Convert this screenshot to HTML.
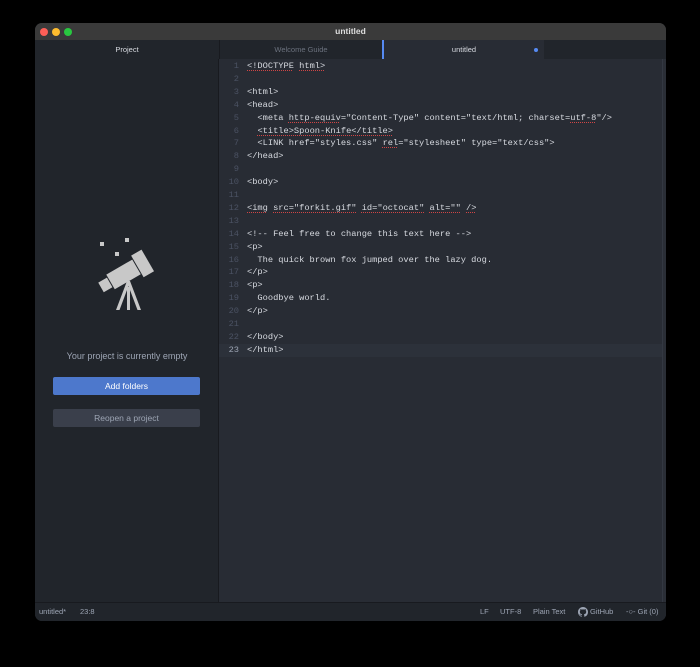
<!DOCTYPE html>
<html><head><meta charset="utf-8"><style>
*{margin:0;padding:0;box-sizing:border-box}
body{width:700px;height:667px;background:#000;position:relative;overflow:hidden;font-family:"Liberation Sans",sans-serif}
.win{position:absolute;left:35px;top:23px;width:631px;height:598px;border-radius:7px;overflow:hidden;background:#282c34}
.title{position:absolute;left:0;top:0;width:100%;height:17px;background:#3a3a3a;color:#ddd;font-size:8.5px;font-weight:bold;text-align:center;line-height:17px}
.dot{position:absolute;top:5px;width:8px;height:8px;border-radius:50%}
.tabs{position:absolute;left:0;top:17px;width:100%;height:19px;background:#21252b;font-size:7.5px;line-height:19px}
.side{position:absolute;left:0;top:36px;width:184px;height:543px;background:#21252b;border-right:1px solid #181a1f}
.ed{position:absolute;left:184px;top:36px;width:447px;height:543px;background:#282c34}
.code{position:absolute;left:0;top:1px;font-family:"Liberation Mono",monospace;font-size:8.7px;line-height:12.9px;color:#d7dae0;white-space:pre}
.ln{position:absolute;left:0;width:20px;text-align:right;color:#4b5263}
.tx{position:absolute;left:28px}
.u{text-decoration-line:underline;text-decoration-style:dotted;text-decoration-color:#d04545;text-underline-offset:2px}
.status{position:absolute;left:0;top:579px;width:100%;height:19px;background:#21252b;border-top:1px solid #181a1f;color:#9da5b4;font-size:7.5px;line-height:18px}
</style></head><body>
<div class="win">
 <div class="title">untitled
  <div class="dot" style="left:5px;background:#fe5f57"></div>
  <div class="dot" style="left:17px;background:#febc2e"></div>
  <div class="dot" style="left:29px;background:#28c840"></div>
 </div>
 <div class="tabs">
  <div style="position:absolute;left:0;width:184px;text-align:center;color:#d7dae0">Project</div>
  <div style="position:absolute;left:184px;width:163px;text-align:center;color:#6b717d;border-left:1px solid #181a1f">Welcome Guide</div>
  <div style="position:absolute;left:347px;width:162px;height:19px;background:#282c34;border-left:2px solid #568af2;text-align:center;color:#d7dae0">untitled<span style="position:absolute;left:150px;top:8px;width:4px;height:4px;border-radius:50%;background:#568af2"></span></div>
 </div>
 <div class="side">
  <svg style="position:absolute;left:60px;top:178px" width="66" height="78" viewBox="0 0 66 78">
   <g fill="#c8c8c8">
    <rect x="5" y="5" width="4" height="4"/><rect x="30" y="1" width="4" height="4"/><rect x="20" y="15" width="4" height="4"/>
    <g transform="rotate(-30 30 36)"><rect x="2" y="31" width="10" height="11"/><rect x="13" y="28" width="30" height="17"/><rect x="44" y="24" width="12" height="25"/></g>
    <path d="M32 44 h3 l11 29 h-3.5 l-9-24 l-9 24 h-3.5z"/>
    <rect x="32" y="50" width="3" height="23"/>
   </g>
  </svg>
  <div style="position:absolute;left:0;top:292px;width:184px;text-align:center;color:#9da5b4;font-size:9px">Your project is currently empty</div>
  <div style="position:absolute;left:18px;top:318px;width:147px;height:18px;background:#4d78cc;border-radius:2px;color:#fff;font-size:8.5px;text-align:center;line-height:18px">Add folders</div>
  <div style="position:absolute;left:18px;top:350px;width:147px;height:18px;background:#3a3f4b;border-radius:2px;color:#9da5b4;font-size:8.5px;text-align:center;line-height:18px">Reopen a project</div>
 </div>
 <div class="ed">
  <div style="position:absolute;left:0;top:285px;width:447px;height:13px;background:#2c313a"></div>
  <div style="position:absolute;right:0;top:0;width:4px;height:543px;background:#2a2e36;border-left:1px solid #333842"></div>
  <div class="code" style="width:447px">
<div class="ln" style="top:0">1</div><div class="tx" style="top:0"><span class="u">&lt;!DOCTYPE</span> <span class="u">html&gt;</span></div>
<div class="ln" style="top:12.9px">2</div>
<div class="ln" style="top:25.8px">3</div><div class="tx" style="top:25.8px">&lt;html&gt;</div>
<div class="ln" style="top:38.7px">4</div><div class="tx" style="top:38.7px">&lt;head&gt;</div>
<div class="ln" style="top:51.6px">5</div><div class="tx" style="top:51.6px">  &lt;meta <span class="u">http-equiv</span>="Content-Type" content="text/html; charset=<span class="u">utf-8</span>"/&gt;</div>
<div class="ln" style="top:64.5px">6</div><div class="tx" style="top:64.5px">  <span class="u">&lt;title&gt;Spoon-Knife&lt;/title&gt;</span></div>
<div class="ln" style="top:77.4px">7</div><div class="tx" style="top:77.4px">  &lt;LINK href="styles.css" <span class="u">rel</span>="stylesheet" type="text/css"&gt;</div>
<div class="ln" style="top:90.3px">8</div><div class="tx" style="top:90.3px">&lt;/head&gt;</div>
<div class="ln" style="top:103.2px">9</div>
<div class="ln" style="top:116.1px">10</div><div class="tx" style="top:116.1px">&lt;body&gt;</div>
<div class="ln" style="top:129px">11</div>
<div class="ln" style="top:141.9px">12</div><div class="tx" style="top:141.9px"><span class="u">&lt;img</span> <span class="u">src="forkit.gif"</span> <span class="u">id="octocat"</span> <span class="u">alt=""</span> <span class="u">/&gt;</span></div>
<div class="ln" style="top:154.8px">13</div>
<div class="ln" style="top:167.7px">14</div><div class="tx" style="top:167.7px">&lt;!-- Feel free to change this text here --&gt;</div>
<div class="ln" style="top:180.6px">15</div><div class="tx" style="top:180.6px">&lt;p&gt;</div>
<div class="ln" style="top:193.5px">16</div><div class="tx" style="top:193.5px">  The quick brown fox jumped over the lazy dog.</div>
<div class="ln" style="top:206.4px">17</div><div class="tx" style="top:206.4px">&lt;/p&gt;</div>
<div class="ln" style="top:219.3px">18</div><div class="tx" style="top:219.3px">&lt;p&gt;</div>
<div class="ln" style="top:232.2px">19</div><div class="tx" style="top:232.2px">  Goodbye world.</div>
<div class="ln" style="top:245.1px">20</div><div class="tx" style="top:245.1px">&lt;/p&gt;</div>
<div class="ln" style="top:258px">21</div>
<div class="ln" style="top:270.9px">22</div><div class="tx" style="top:270.9px">&lt;/body&gt;</div>
<div class="ln" style="top:283.8px;color:#9da5b4">23</div><div class="tx" style="top:283.8px">&lt;/html&gt;</div>
  </div>
 </div>
 <div class="status">
  <span style="position:absolute;left:4px">untitled*</span>
  <span style="position:absolute;left:45px">23:8</span>
  <span style="position:absolute;left:445px">LF</span>
  <span style="position:absolute;left:465px">UTF-8</span>
  <span style="position:absolute;left:498px">Plain Text</span>
  <svg style="position:absolute;left:543px;top:4px" width="10" height="10" viewBox="0 0 16 16"><path fill="#9da5b4" d="M8 0C3.58 0 0 3.58 0 8c0 3.540 2.290 6.530 5.470 7.590.4.07.55-.17.55-.38v-1.34c-2.22.48-2.69-1.07-2.69-1.07-.36-.92-.89-1.170-.89-1.17-.73-.5.06-.49.06-.49.8.06 1.23.83 1.23.83.71 1.22 1.87.87 2.33.66.07-.52.28-.87.51-1.07-1.78-.2-3.64-.89-3.64-3.95 0-.87.31-1.59.82-2.15-.08-.2-.36-1.02.08-2.12 0 0 .67-.21 2.2.82a7.6 7.6 0 014 0c1.53-1.04 2.2-.82 2.2-.82.44 1.1.16 1.92.08 2.12.51.56.82 1.27.82 2.15 0 3.07-1.87 3.75-3.65 3.95.29.25.54.73.54 1.48v2.2c0 .21.15.46.55.38A8 8 0 0016 8c0-4.42-3.58-8-8-8z"/></svg>
  <span style="position:absolute;left:555px">GitHub</span>
  <span style="position:absolute;left:591px">-○- Git (0)</span>
 </div>
</div>
</body></html>
